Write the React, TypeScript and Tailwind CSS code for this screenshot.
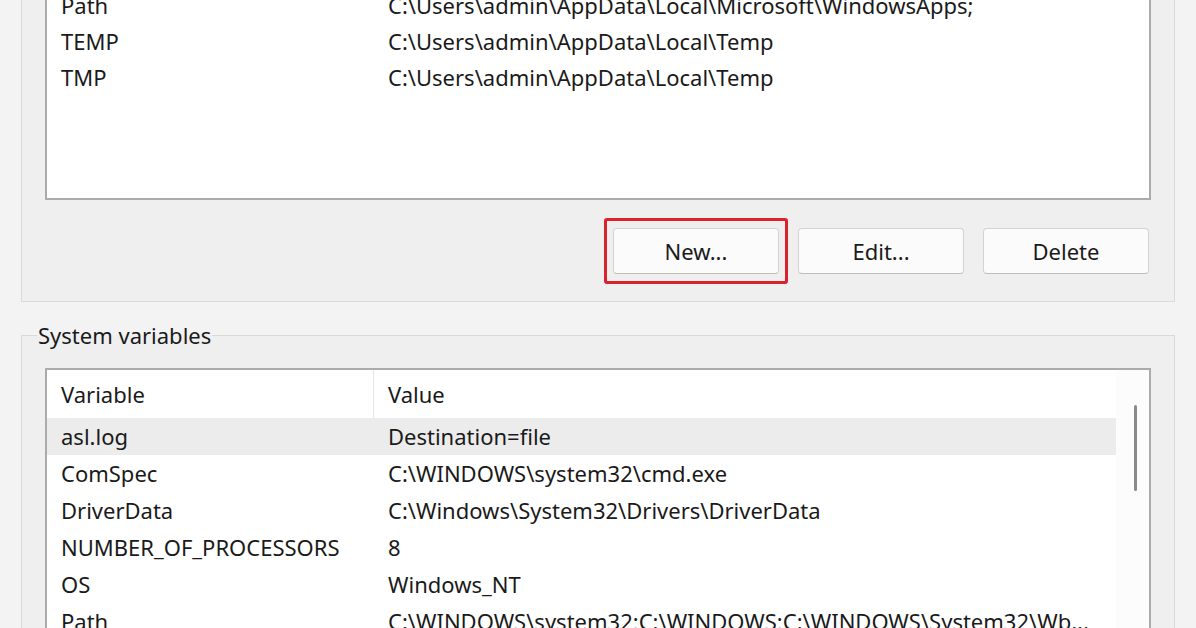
import React from 'react';

type Row = { name: string; value: string };

const userRows: Row[] = [
  { name: 'Path', value: 'C:\\Users\\admin\\AppData\\Local\\Microsoft\\WindowsApps;' },
  { name: 'TEMP', value: 'C:\\Users\\admin\\AppData\\Local\\Temp' },
  { name: 'TMP', value: 'C:\\Users\\admin\\AppData\\Local\\Temp' },
];

const systemRows: Row[] = [
  { name: 'asl.log', value: 'Destination=file' },
  { name: 'ComSpec', value: 'C:\\WINDOWS\\system32\\cmd.exe' },
  { name: 'DriverData', value: 'C:\\Windows\\System32\\Drivers\\DriverData' },
  { name: 'NUMBER_OF_PROCESSORS', value: '8' },
  { name: 'OS', value: 'Windows_NT' },
  { name: 'Path', value: 'C:\\WINDOWS\\system32;C:\\WINDOWS;C:\\WINDOWS\\System32\\Wb...' },
];

const VarRow = ({ row, selected, tall }: { row: Row; selected?: boolean; tall?: boolean }) => (
  <div
    className={`flex items-center whitespace-nowrap ${tall ? 'h-[37px]' : 'h-[36px]'} ${
      selected ? 'bg-[#ececec]' : ''
    }`}
  >
    <div className="w-[327px] shrink-0 pl-[14px]">{row.name}</div>
    <div className="pl-[14px] overflow-hidden">{row.value}</div>
  </div>
);

const WinButton = ({ label }: { label: string }) => (
  <button className="w-[166px] h-[46px] rounded-[4px] border border-[#d3d3d3] border-b-[#bdbdbd] bg-[#fbfbfb] text-[22px] text-[#1a1a1a]">
    {label}
  </button>
);

export default function App() {
  return (
    <div
      className="w-[1196px] h-[628px] overflow-hidden bg-[#f3f3f3] text-[22px] text-[#1a1a1a] flex flex-col"
      style={{ fontFamily: '"Noto Sans", "Open Sans", sans-serif' }}
    >
      {/* User variables group */}
      <div className="mt-[-40px] ml-[21px] w-[1154px] shrink-0 border border-[#dadada] bg-[#efefef] px-[23px] pt-[24px] pb-[27px]">
        <div className="h-[215px] border-2 border-[#ababab] bg-white">
          {userRows.map((r) => (
            <VarRow key={r.name} row={r} />
          ))}
        </div>
        <div className="mt-[28px] flex justify-end gap-[19px] pr-[2px]">
          <div className="relative">
            <WinButton label="New..." />
            <div className="absolute inset-x-[-9px] inset-y-[-10px] border-[3px] border-[#d9222c] rounded-[3px] pointer-events-none" />
          </div>
          <WinButton label="Edit..." />
          <WinButton label="Delete" />
        </div>
      </div>

      {/* System variables group */}
      <fieldset className="mt-[19px] ml-[21px] w-[1154px] shrink-0 border border-[#dadada] bg-[#efefef] h-[400px]">
        <legend className="ml-[15px] px-[1px] leading-[28px]">System variables</legend>
        <div className="mx-[23px] mt-[19px] h-[340px] border-2 border-[#ababab] bg-white flex">
          <div className="flex-1 flex flex-col">
            <div className="flex items-center h-[48px] whitespace-nowrap">
              <div className="w-[327px] shrink-0 h-full flex items-center pl-[14px] border-r border-[#e6e6e6]">
                Variable
              </div>
              <div className="pl-[14px]">Value</div>
            </div>
            {systemRows.map((r, i) => (
              <VarRow key={r.name} row={r} selected={i === 0} tall />
            ))}
          </div>
          <div className="w-[33px] shrink-0 bg-[#fcfcfc] pt-[35px] flex justify-center">
            <div className="w-[3px] h-[86px] rounded-full bg-[#8a8a8a] ml-[5px]" />
          </div>
        </div>
      </fieldset>
    </div>
  );
}
